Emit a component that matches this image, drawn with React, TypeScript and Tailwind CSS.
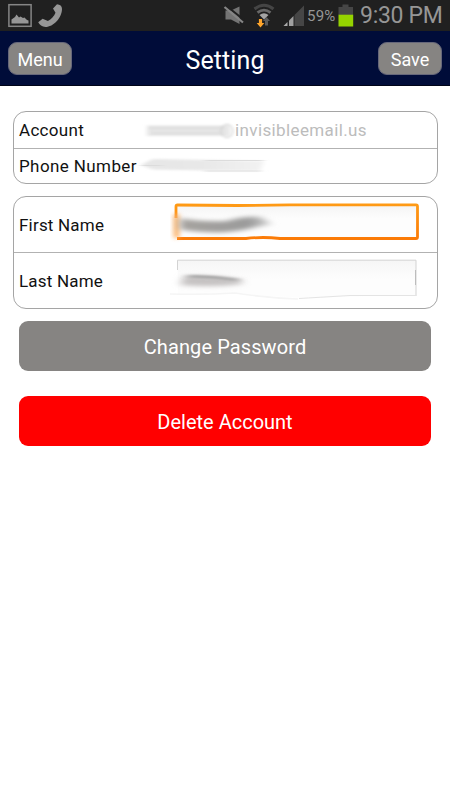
import { useState } from 'react';

function StatusBar() {
  return (
    <div className="flex h-[31px] items-center bg-[#202020] text-[#969696]">
      {/* Notifications */}
      <svg width="66" height="31" viewBox="0 0 66 31" className="shrink-0">
        <rect x="8.900" y="4.700" width="22.200" height="21.600" fill="none" stroke="#858585" strokeWidth="1.500" />
        <path d="M11.500 23.500v-4l3.500-2.500 1.500-2.500 2.500 3 1.500-1 2.500 1.500 1.500-.5 2.500 2.500 1.500.5v3z" fill="#969696" />
        <path
          d="M57 4.200c3 .1 5 2 5 4.700 0 8.600-8.500 18-16.500 18-3.500 0-6-2-7.300-4.700l4.400-3.400 5.300 2.300c3.300-1.700 6.300-5 7.600-8.400l-2.500-4.200z"
          fill="#969696"
        />
      </svg>

      {/* System icons */}
      <svg width="85" height="31" viewBox="220 0 85 31" className="ml-[154px] shrink-0">
        <path d="M225.500 10.500h5.500l8.500-4v17.500l-8.500-4.500h-5.500z" fill="#747474" />
        <path d="M226 5.500l18 14.500" stroke="#202020" strokeWidth="2" />
        <path d="M224.500 7l18.500 15.500" stroke="#868686" strokeWidth="2.200" />
        <g fill="none">
          <path d="M254.500 9q9.500-7.600 19 0" stroke="#454545" strokeWidth="3" />
          <path d="M257.500 12.700q6.500-5.200 13 0" stroke="#686868" strokeWidth="2.800" />
        </g>
        <path d="M259.500 15q4.500-3.500 9 0l-4.500 4.400z" fill="#a5a5a5" />
        <path d="M258.900 19h3.200v4h2.200l-3.800 4.500-3.800-4.500h2.200z" fill="#ffa52b" />
        <path d="M266.500 17l3.500 4h-2v4.500h-3v-4.500h-2z" fill="#5c5c5c" />
        <path d="M304 5.500V26h-9.500V15z" fill="#464646" />
        <path d="M283.500 26l4-4v4z" fill="#ababab" />
        <path d="M289 20.500l4.500-4.500v10h-4.500z" fill="#a0a0a0" />
      </svg>
      <span className="ml-[2px] w-[29px] whitespace-nowrap pt-[2px] text-[15px] leading-[29px] tracking-[0.200px]">59%</span>
      <svg width="16" height="31" viewBox="338 0 16 31" className="ml-[2px] shrink-0">
        <path d="M338.500 7h4V4.500h6V7h4.500v8h-14.500z" fill="#464646" />
        <rect x="338.500" y="14.700" width="14.700" height="11.800" fill="#95d300" />
      </svg>
      <span className="ml-[6px] whitespace-nowrap pt-px text-[23px] leading-[30px] tracking-[-0.300px]">9:30 PM</span>
    </div>
  );
}

function Header() {
  return (
    <div className="flex h-[55px] items-center justify-between border-b border-[#000418] bg-[#000c39] px-[8px] text-white">
      <button className="h-[33px] w-[64px] rounded-[9px] border border-[#66677a] bg-[#868482] pt-[2px] text-[18px] leading-[29px]">
        Menu
      </button>
      <h1 className="pt-[5px] text-[25px] leading-[50px] tracking-[0.100px]">Setting</h1>
      <button className="h-[33px] w-[64px] rounded-[9px] border border-[#66677a] bg-[#868482] pt-[2px] text-[18px] leading-[29px]">
        Save
      </button>
    </div>
  );
}

// Smeared ink over the private values
function AccountSmudge() {
  return (
    <svg width="93" height="36" viewBox="142 112 93 36" className="shrink-0">
      <defs>
        <filter id="soft" x="-20%" y="-60%" width="140%" height="220%">
          <feGaussianBlur stdDeviation="2 1.200" />
        </filter>
        <filter id="hair" x="-10%" y="-20%" width="120%" height="140%">
          <feGaussianBlur stdDeviation="1.500 .9" />
        </filter>
      </defs>
      <rect x="147" y="125.500" width="83" height="10.500" fill="#e6e6e6" filter="url(#soft)" />
      <g filter="url(#hair)" fill="none" stroke="#d6d6d6">
        <path d="M149 128h75v.1M151 133h70v.1" />
        <ellipse cx="227" cy="131" rx="6" ry="6.500" stroke="#c8c8c8" />
      </g>
    </svg>
  );
}

function PhoneSmudge() {
  return (
    <svg width="140" height="34" viewBox="134 149 140 34" className="shrink-0">
      <defs>
        <linearGradient id="phone-ink">
          <stop offset="0" stopColor="#e6e6e6" />
          <stop offset=".5" stopColor="#e8e8e8" />
          <stop offset="1" stopColor="#f2f2f2" />
        </linearGradient>
        <filter id="phone-soft" x="-10%" y="-60%" width="120%" height="220%">
          <feGaussianBlur stdDeviation="2.500 1.300" />
        </filter>
        <filter id="phone-hair" x="-10%" y="-60%" width="120%" height="220%">
          <feGaussianBlur stdDeviation="3 .6" />
        </filter>
      </defs>
      <path d="M141 165l12-6 60 1 51 1-4 10-50-.5-57-1z" fill="url(#phone-ink)" filter="url(#phone-soft)" />
      <g filter="url(#phone-hair)" stroke="#dcdcdc" fill="none">
        <path d="M142 165.500h20v.1M205 160.500h58v.1M205 171h56v.1" />
      </g>
    </svg>
  );
}

function FirstNameField() {
  return (
    <svg width="250" height="44" viewBox="170 200 250 44">
      <defs>
        <linearGradient id="focus" gradientUnits="userSpaceOnUse" x1="0" y1="204" x2="0" y2="239">
          <stop offset="0" stopColor="#ff9b16" />
          <stop offset="1" stopColor="#fb7a06" />
        </linearGradient>
        <linearGradient id="inner" x1="0" y1="0" x2="0" y2="1">
          <stop offset="0" stopColor="#f5f5f5" />
          <stop offset=".4" stopColor="#fdfdfd" />
        </linearGradient>
        <linearGradient id="ink" x1="0" y1="0" x2="1" y2="0">
          <stop offset="0" stopColor="#a6a39f" />
          <stop offset=".75" stopColor="#9a9a9a" />
          <stop offset="1" stopColor="#d5d5d5" />
        </linearGradient>
        <filter id="blur3" x="-60%" y="-100%" width="220%" height="300%">
          <feGaussianBlur stdDeviation="4 2.200" />
        </filter>
        <filter id="blur2" x="-100%" y="-50%" width="300%" height="200%">
          <feGaussianBlur stdDeviation="2.200 2" />
        </filter>
      </defs>
      <path d="M177 206h240v31H177z" fill="url(#inner)" />
      <path
        d="M176 218v-11.500q0-1.500 1.500-1.500l60 .5 52-.6H416q1.500 0 1.500 1.500V237q0 1.500-1.500 1.500H280q-17-2-34 0h-69"
        fill="none"
        stroke="url(#focus)"
        strokeWidth="2.800"
      />
      <rect x="173" y="214" width="7" height="24" fill="#fcb36b" opacity=".8" filter="url(#blur2)" />
      <path d="M180 218q22 4 47 3 17-5 33-4l12 7-18 3.500q-15 4-34 5-22 0-40-3z" fill="url(#ink)" filter="url(#blur3)" />
    </svg>
  );
}

function LastNameField() {
  return (
    <svg width="252" height="52" viewBox="168 256 252 52" className="relative top-[1px] overflow-visible">
      <defs>
        <linearGradient id="plain" x1="0" y1="0" x2="0" y2="1">
          <stop offset="0" stopColor="#f6f6f6" />
          <stop offset=".5" stopColor="#fdfdfd" />
        </linearGradient>
        <filter id="ink-line" x="-20%" y="-300%" width="140%" height="700%">
          <feGaussianBlur stdDeviation="4 1" />
        </filter>
      </defs>
      <path d="M177.500 260.500H416v35q-60 0-100 2.500-45-1-78-5l-60 2z" fill="url(#plain)" />
      <path d="M177.500 270v-9.800H416V296" fill="none" stroke="#d3d3d3" />
      <path d="M415.500 270v15" stroke="#bdbdbd" />
      <path d="M416 295.500h-66q-34 2-51 3" fill="none" stroke="#e4e4e4" />
      <path d="M170 294q35 1 65-1 32 5 63 6" fill="none" stroke="#f5f5f5" strokeWidth="1.500" />
      <path d="M184 276q30-1 58 4v4q-28 4-62 1z" fill="#c6c3c3" filter="url(#blur3)" />
      <path d="M188 276.500q25-.5 50 3.500" fill="none" stroke="#999" strokeWidth="2.200" filter="url(#ink-line)" />
    </svg>
  );
}

export default function App() {
  const [email] = useState('invisibleemail.us');

  return (
    <div className="h-[800px] w-[450px] overflow-hidden bg-white font-[Roboto,sans-serif] text-[#111]">
      <StatusBar />
      <Header />

      <main className="px-[13px] pt-[25px]">
        <section className="h-[73px] w-[425px] rounded-[13px] border border-[#a5a5a5] text-[17px]">
          <div className="flex h-[37px] items-center border-b border-[#b2b2b2] pl-[5px]">
            <span className="w-[123px] pt-[2px] tracking-[0.300px]">Account</span>
            <AccountSmudge />
            <span className="pt-[2px] tracking-[0.380px] text-[#bcbcbc]">{email}</span>
          </div>
          <div className="flex h-[34px] items-center pl-[5px]">
            <span className="w-[115px] whitespace-nowrap pt-[2px] tracking-[0.400px]">Phone Number</span>
            <PhoneSmudge />
          </div>
        </section>

        <section className="mt-[12px] h-[113px] w-[425px] rounded-[13px] border border-[#a5a5a5] text-[17px]">
          <div className="flex h-[56px] items-center border-b border-[#b2b2b2] pl-[5px]">
            <span className="w-[151px] pt-[2px] tracking-[0.200px]">First Name</span>
            <div className="-mt-[6px]">
              <FirstNameField />
            </div>
          </div>
          <div className="flex h-[55px] items-center pl-[5px]">
            <span className="w-[149px] pt-[2px] tracking-[0.200px]">Last Name</span>
            <LastNameField />
          </div>
        </section>

        <div className="mt-[12px] flex flex-col gap-[25px] px-[6px] text-[20px] text-white">
          <button className="h-[50px] w-[412px] rounded-[9px] bg-[#868482] pt-[2px] tracking-[0.100px]">Change Password</button>
          <button className="h-[50px] w-[412px] rounded-[9px] bg-[#ff0000] pt-[2px]">Delete Account</button>
        </div>
      </main>
    </div>
  );
}
